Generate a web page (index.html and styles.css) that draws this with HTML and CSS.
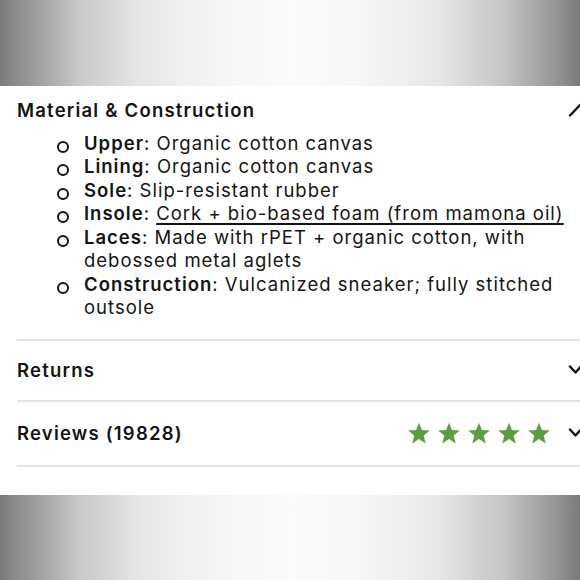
FILE: index.html
```html
<!DOCTYPE html>
<html lang="en">
<head>
<meta charset="utf-8">
<title>Material &amp; Construction</title>
<link rel="stylesheet" href="styles.css">
</head>
<body>
<div class="screen">
  <div class="band"></div>
  <main class="panel">
    <section class="section open">
      <div class="head">
        <h2 class="title">Material &amp; Construction</h2>
        <svg class="chev" viewBox="0 0 11 14" width="11" height="14" aria-hidden="true"><path d="M1 12.5 L11 2" fill="none" stroke="#111" stroke-width="2.4" stroke-linecap="round"/></svg>
      </div>
      <ul class="specs">
        <li><span class="txt"><b>Upper</b>: Organic cotton canvas</span></li>
        <li><span class="txt"><b>Lining</b>: Organic cotton canvas</span></li>
        <li><span class="txt"><b>Sole</b>: Slip-resistant rubber</span></li>
        <li><span class="txt"><b>Insole</b>: <a class="link">Cork + bio-based foam (from mamona oil)</a></span></li>
        <li><span class="txt"><b>Laces</b>: Made with rPET + organic cotton, with debossed metal aglets</span></li>
        <li><span class="txt"><b>Construction</b>: Vulcanized sneaker; fully stitched outsole</span></li>
      </ul>
    </section>
    <section class="row">
      <h2 class="title">Returns</h2>
      <svg class="chev down" viewBox="0 0 11 10" width="11" height="10" aria-hidden="true"><path d="M1 1.5 L6.5 7.5 L12 1.5" fill="none" stroke="#111" stroke-width="2.4" stroke-linecap="round" stroke-linejoin="round"/></svg>
    </section>
    <section class="row">
      <h2 class="title">Reviews (19828)</h2>
      <div class="stars" aria-label="5 stars">
        <svg viewBox="0 0 24 23" width="24" height="23"><path d="M12 0.8 L14.9 8.1 L22.8 8.6 L16.7 13.6 L18.7 21.4 L12 17.1 L5.3 21.4 L7.3 13.6 L1.2 8.6 L9.1 8.1 Z" fill="#5b9d3f"/></svg>
        <svg viewBox="0 0 24 23" width="24" height="23"><path d="M12 0.8 L14.9 8.1 L22.8 8.6 L16.7 13.6 L18.7 21.4 L12 17.1 L5.3 21.4 L7.3 13.6 L1.2 8.6 L9.1 8.1 Z" fill="#5b9d3f"/></svg>
        <svg viewBox="0 0 24 23" width="24" height="23"><path d="M12 0.8 L14.9 8.1 L22.8 8.6 L16.7 13.6 L18.7 21.4 L12 17.1 L5.3 21.4 L7.3 13.6 L1.2 8.6 L9.1 8.1 Z" fill="#5b9d3f"/></svg>
        <svg viewBox="0 0 24 23" width="24" height="23"><path d="M12 0.8 L14.9 8.1 L22.8 8.6 L16.7 13.6 L18.7 21.4 L12 17.1 L5.3 21.4 L7.3 13.6 L1.2 8.6 L9.1 8.1 Z" fill="#5b9d3f"/></svg>
        <svg viewBox="0 0 24 23" width="24" height="23"><path d="M12 0.8 L14.9 8.1 L22.8 8.6 L16.7 13.6 L18.7 21.4 L12 17.1 L5.3 21.4 L7.3 13.6 L1.2 8.6 L9.1 8.1 Z" fill="#5b9d3f"/></svg>
      </div>
      <svg class="chev down" viewBox="0 0 11 10" width="11" height="10" aria-hidden="true"><path d="M1 1.5 L6.5 7.5 L12 1.5" fill="none" stroke="#111" stroke-width="2.4" stroke-linecap="round" stroke-linejoin="round"/></svg>
    </section>
  </main>
  <div class="band"></div>
</div>
</body>
</html>
```

FILE: styles.css
```css
* { box-sizing: border-box; }

html, body {
  margin: 0;
  padding: 0;
}

body {
  width: 580px;
  height: 580px;
  overflow: hidden;
  font-family: Inter, "Open Sans", "Liberation Sans", sans-serif;
  color: #141414;
  background: linear-gradient(to right,
    #7b7b7b 0%, #9d9d9d 6%, #cacaca 14%, #e6e6e6 24%, #f6f6f6 38%,
    #fbfbfb 50%, #f7f7f7 62%, #e6e6e6 76%, #c4c4c4 87%, #9a9a9a 95%, #7a7a7a 100%);
}

.screen {
  display: flex;
  flex-direction: column;
  height: 580px;
}

.band {
  flex: 1;
}

.panel {
  height: 409px;
  background: #fff;
  padding-left: 17px;
  overflow: hidden;
}

.title {
  margin: 0;
  font-size: 18.5px;
  font-weight: 600;
  line-height: 24px;
  letter-spacing: 1.2px;
}

.section.open {
  padding-top: 12px;
  padding-bottom: 19px;
  border-bottom: 2px solid #e4e4e4;
}

.head {
  display: flex;
  align-items: center;
  justify-content: space-between;
}

.chev {
  display: block;
  flex: none;
  overflow: visible;
}

.specs {
  list-style: none;
  margin: 10px 0 0;
  padding: 0;
  font-size: 18.5px;
  line-height: 23.5px;
  letter-spacing: 1px;
}

.specs li {
  display: flex;
  align-items: flex-start;
  padding-left: 40px;
}

.specs li::before {
  content: "";
  flex: none;
  width: 8px;
  height: 8px;
  margin-top: 9px;
  margin-right: 15px;
  border: 2px solid #141414;
  border-radius: 50%;
}

.txt {
  flex: 1;
  min-width: 0;
}

.specs b {
  font-weight: 600;
}

.link {
  color: inherit;
  text-decoration: underline;
  text-underline-offset: 3px;
  text-decoration-thickness: 1.5px;
}

.row {
  display: flex;
  align-items: center;
  border-bottom: 2px solid #e4e4e4;
}

.row:nth-of-type(2) { height: 61px; }
.row:nth-of-type(3) { height: 65px; }

.row .title {
  flex: 1;
}

.stars {
  display: flex;
  gap: 6px;
  margin-right: 18px;
}

.stars svg {
  display: block;
}
```
